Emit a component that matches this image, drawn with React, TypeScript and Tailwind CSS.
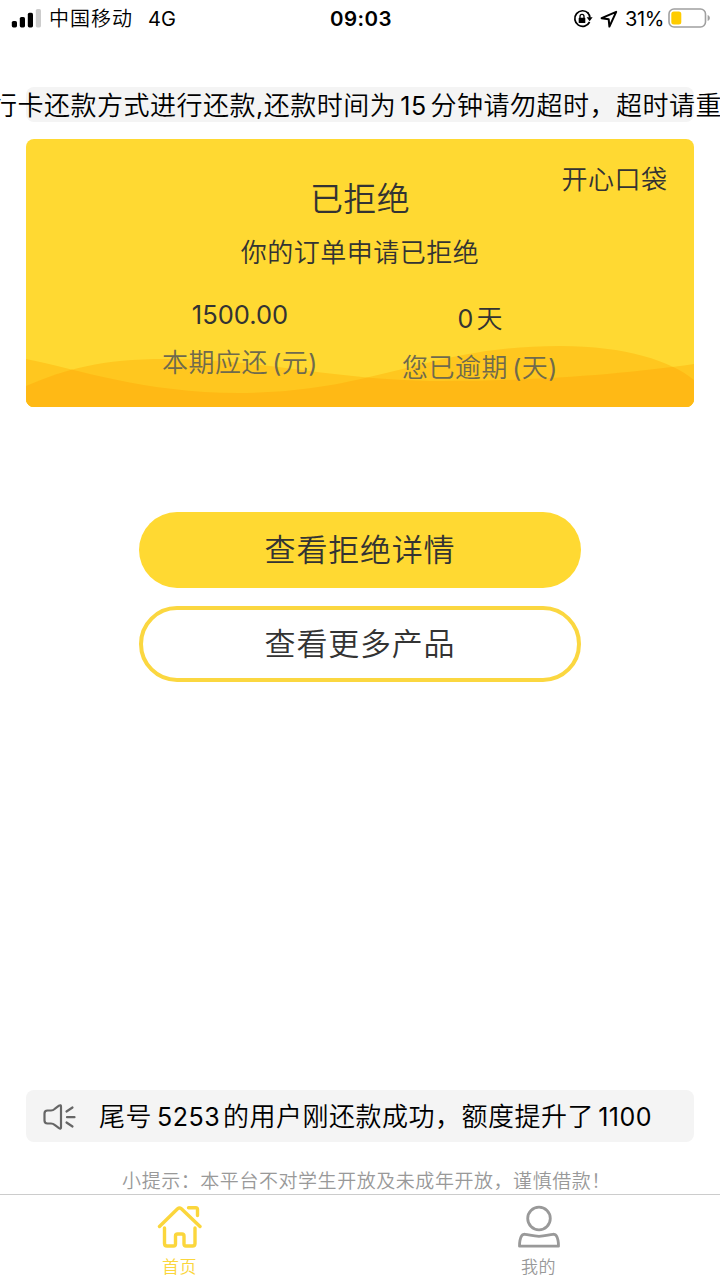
import React from "react";

function StatusBar() {
  return (
    <header className="flex h-[37px] items-center pl-[11px] pr-[9px] text-black">
      <div className="flex flex-1 items-center">
        <svg width="31" height="20" viewBox="0 0 31 20">
          <rect x="0.8" y="12" width="5.2" height="6.4" rx="1.6" fill="#000" />
          <rect x="8.8" y="8" width="5.2" height="10.4" rx="1.6" fill="#000" />
          <rect x="16.8" y="3.8" width="5.2" height="14.600" rx="1.6" fill="#000" />
          <rect x="24.8" y="0" width="5.2" height="18.4" rx="1.6" fill="#ccc" />
        </svg>
        <span className="ml-[7px] pt-px text-[20px] tracking-[1px]">中国移动</span>
        <span className="ml-[15px] pt-px text-[20px]">4G</span>
      </div>
      <div className="pt-px text-[20.5px] font-semibold tracking-[0.5px]">09:03</div>
      <div className="flex flex-1 items-center justify-end">
        {/* Rotation lock */}
        <svg width="20" height="20" viewBox="0 0 20 20" fill="none">
          <path d="M15.2 4.1A7.8 7.8 0 1 0 16.6 13" stroke="#000" strokeWidth="1.7" />
          <path d="M14.6 3.6a7.8 7.8 0 0 1 2.3 5" stroke="#000" strokeWidth="1.7" />
          <path d="M13.6 8.2h6l-3 4z" fill="#000" />
          <rect x="5.7" y="8.8" width="6.6" height="5.2" rx="0.6" fill="#000" />
          <path d="M7 9V7.4a2 2 0 0 1 4 0V9" stroke="#000" strokeWidth="1.3" />
        </svg>
        <svg className="ml-[7px]" width="18" height="18" viewBox="0 0 18 18" fill="none">
          <path d="M16.200 1.800 1.600 8.200l7.100 1.100.7 7.300z" stroke="#000" strokeWidth="2" strokeLinejoin="round" />
        </svg>
        <span className="ml-[7px] pt-px text-[20px] tracking-[-0.4px]">31%</span>
        <svg className="-mt-px ml-[4px]" width="43" height="20" viewBox="0 0 43 20" fill="none">
          <rect x="1" y="1" width="36.5" height="18" rx="5" stroke="#a0a0a0" strokeWidth="1.6" />
          <rect x="3.3" y="3.5" width="10" height="13" rx="2.5" fill="#fc0" />
          <path d="M39.6 7c3 .8 3 5.200 0 6z" fill="#a0a0a0" />
        </svg>
      </div>
    </header>
  );
}

function OrderCard() {
  return (
    <section className="relative mx-[26px] mt-[17px] h-[268px] overflow-hidden rounded-[8px] bg-[#ffd932] text-[#333]">
      {/* Waves */}
      <svg className="absolute inset-0" width="668" height="268" viewBox="0 0 668 268">
        <defs>
          <clipPath id="wave">
            <path d="M0 220C50 230 120 254 212 254C350 254 400 207 534 207C600 207 645 222 668 241V268H0z" />
          </clipPath>
        </defs>
        <path d="M0 220C50 230 120 254 212 254C350 254 400 207 534 207C600 207 645 222 668 241V268H0z" fill="#ffc71f" />
        <path d="M0 247C40 230 75 220 140 220C240 220 310 242 417 242C510 242 600 235 668 225V268H0z" fill="#ffc71f" />
        <path d="M0 247C40 230 75 220 140 220C240 220 310 242 417 242C510 242 600 235 668 225V268H0z" fill="#ffb915" clipPath="url(#wave)" />
      </svg>

      <div className="absolute right-[26.5px] top-[21px] text-[26px] leading-[40px] tracking-[0.5px]">开心口袋</div>

      <div className="relative flex flex-col items-center">
        <h1 className="mt-[36px] text-[33px] leading-[48px] tracking-[0.4px]">已拒绝</h1>
        <p className="mt-[10px] text-[26px] leading-[40px] tracking-[0.5px]">你的订单申请已拒绝</p>
      </div>

      <div className="relative flex pl-[94px]">
        <div className="mt-[22px] w-[240px] text-center">
          <div className="text-[25.5px] leading-[40px]">1500.00</div>
          <div className="mt-[8px] text-[26px] leading-[40px] tracking-[0.5px] text-[#6f6a4d]">
            本期应还<span className="ml-[4px] text-[25px]">(</span>元<span className="text-[25px]">)</span>
          </div>
        </div>
        <div className="mt-[26px] w-[240px] text-center">
          <div className="text-[26px] leading-[40px]">
            <span className="mr-[3px] text-[25px]">0</span>天
          </div>
          <div className="mt-[9px] text-[26px] leading-[40px] tracking-[0.5px] text-[#6f6a4d]">
            您已逾期<span className="ml-[4px] text-[25px]">(</span>天<span className="text-[25px]">)</span>
          </div>
        </div>
      </div>
    </section>
  );
}

function TabBar() {
  return (
    <nav className="flex h-[86px] border-t border-[#ccc] pr-[2px] text-[17px] leading-[24px]">
      <a className="flex flex-1 flex-col items-center pt-[10px] text-[#fbd63c]">
        <svg width="46" height="44" viewBox="0 0 46 44" fill="none" stroke="currentColor" strokeWidth="3.4" strokeLinecap="round" strokeLinejoin="round">
          <path d="M2.500 21.500 20.600 3.800Q22.500 2.200 24.400 3.800L43 21.500" />
          <path d="M31.500 2.700h7.200q1.800 0 1.800 1.800v6" />
          <path d="M7.500 23v15.500q0 2.500 2.500 2.500h6.500q2 0 2-2V31q0-2 2-2h4.500q2 0 2 2v8q0 2 2 2h6.500q2.500 0 2.500-2.500V23" />
        </svg>
        <span className="mt-[6px] tracking-[0.4px]">首页</span>
      </a>
      <a className="flex flex-1 flex-col items-center pt-[10px] text-[#999]">
        <svg width="46" height="44" viewBox="0 0 46 44" fill="none" stroke="currentColor" strokeWidth="2.800" strokeLinejoin="round">
          <circle cx="23" cy="13.500" r="11.300" />
          <path d="M3.500 41.200c0-4 .5-7.500 2-10.200q1-2 3.500-1.700c5 .6 8 2 14 2s9-1.400 14-2q2.500-.3 3.500 1.700c1.500 2.700 2 6.200 2 10.200z" />
        </svg>
        <span className="mt-[6px] tracking-[0.4px]">我的</span>
      </a>
    </nav>
  );
}

export default function App() {
  return (
    <div className="flex h-[1280px] w-[720px] flex-col overflow-hidden whitespace-nowrap bg-white font-['Inter','Noto_Sans_CJK_SC_DemiLight','Noto_Sans_CJK_SC',sans-serif]">
      <StatusBar />

      {/* Scrolling notice */}
      <div className="mx-[26px] mt-[50px] flex h-[35px] items-center rounded-[8px] bg-[#f4f4f4] pt-[2px] text-[26px] tracking-[0.5px] text-black">
        <p className="ml-[-35px]">
          行卡还款方式进行还款<span className="text-[25px]">,</span>还款时间为
          <span className="ml-[4px] mr-[4px] text-[25px]">15</span>分钟请勿超时，超时请重
        </p>
      </div>

      <OrderCard />

      <div className="mt-[105px] flex flex-col items-center gap-[18px] text-[31px] tracking-[0.8px] text-[#333]">
        <button className="h-[76px] w-[442px] rounded-full bg-[#ffd932]">查看拒绝详情</button>
        <button className="h-[76px] w-[442px] rounded-full border-[4px] border-[#fbd740]">查看更多产品</button>
      </div>

      <div className="mx-[26px] mt-auto flex h-[52px] items-center rounded-[8px] bg-[#f4f4f4] pl-[16px] pt-[2px] text-[26px] tracking-[0.5px] text-black">
        <svg width="34" height="28" viewBox="0 0 34 28" fill="none" stroke="#666" strokeWidth="2.200" strokeLinecap="round" strokeLinejoin="round">
          <path d="M2.500 10.500q0-3 3-3h3.500q2 0 4-1.800l4-3q2-1.300 2 1v20.500q0 2.300-2 1l-4-3q-2-1.700-4-1.700H5.500q-3 0-3-3z" />
          <path d="M24.500 8.500l6-4M25 14.200h7.500M24.500 19.500l6 4" />
        </svg>
        <p className="ml-[23px]">
          尾号<span className="ml-[5px] mr-[3px] text-[25px]">5253</span>的用户刚还款成功，额度提升了
          <span className="ml-[4px] text-[25px]">1100</span>
        </p>
      </div>
      <p className="mt-[26px] h-[26px] pl-[13px] text-center text-[19px] leading-[28px] tracking-[0.55px] text-[#999]">
        小提示：本平台不对学生开放及未成年开放，谨慎借款！
      </p>

      <TabBar />
    </div>
  );
}
